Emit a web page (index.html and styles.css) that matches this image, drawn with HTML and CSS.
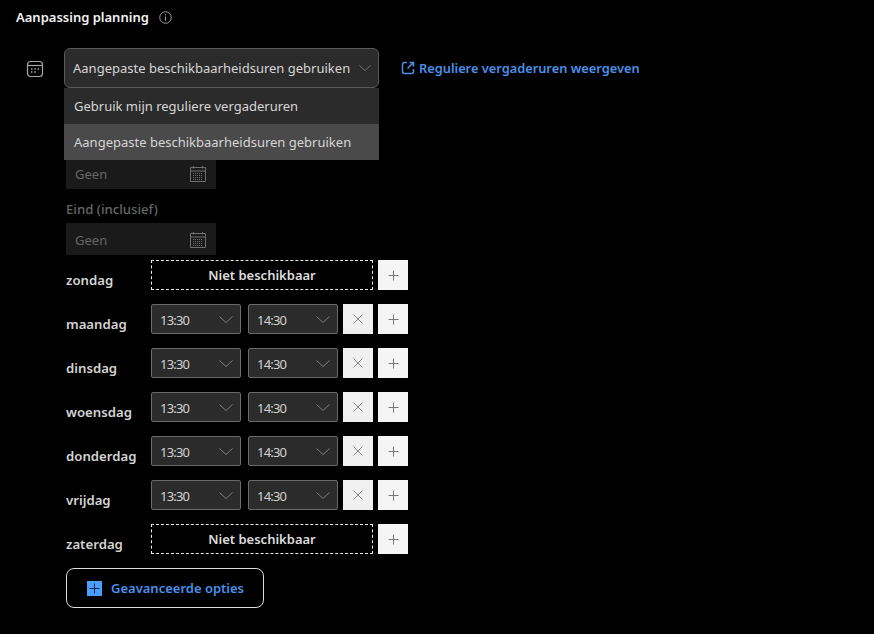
FILE: index.html
```html
<!DOCTYPE html>
<html lang="nl">
<head>
<meta charset="utf-8">
<title>Aanpassing planning</title>
<link rel="stylesheet" href="styles.css">
</head>
<body>
<svg class="defs" width="0" height="0" aria-hidden="true">
  <symbol id="cal" viewBox="0 0 18 18">
    <path d="M1.500 2.500h15v14h-15z M1.500 6h15 M4.500 1v2.500 M13.500 1v2.500" fill="none" stroke="currentColor" stroke-width="1"/>
    <path d="M4 8.500h10M4 10.500h10M4 12.500h10M4 14.500h10" fill="none" stroke="currentColor" stroke-width="1" stroke-dasharray="1 1"/>
  </symbol>
  <symbol id="chev" viewBox="0 0 14 7">
    <path d="M0.500 0.500l6.500 6 6.500-6" fill="none" stroke="currentColor" stroke-width="1"/>
  </symbol>
  <symbol id="plus" viewBox="0 0 12 12">
    <path d="M6.500 1.500v10M1.500 6.500h10" fill="none" stroke="currentColor" stroke-width="1"/>
  </symbol>
  <symbol id="cross" viewBox="0 0 12 12">
    <path d="M1.500 1.500l9 9M10.500 1.500l-9 9" fill="none" stroke="currentColor" stroke-width="1"/>
  </symbol>
</svg>

<header class="heading">
  <h1 class="title">Aanpassing planning</h1>
  <svg class="info" viewBox="0 0 14 14" width="13" height="13"><circle cx="7" cy="7" r="6.200" fill="none" stroke="currentColor"/><path d="M7 6v4.500M7 3.500v1.200" stroke="currentColor" fill="none"/></svg>
</header>

<main class="layout">
  <svg class="side-icon" viewBox="0 0 18 18" width="18" height="18">
    <rect x="1.500" y="1.500" width="15" height="15" rx="3" fill="none" stroke="currentColor" stroke-width="1.200"/>
    <path d="M1.500 5.500h15" stroke="currentColor" stroke-width="1.200"/>
    <path d="M5 9h1.500M8.300 9h1.500M11.600 9h1.500M5 12h1.500M8.300 12h1.500" stroke="currentColor" stroke-width="1.500"/>
  </svg>
  <div class="content">
    <div class="top-row">
      <div class="combo">
        <div class="combo-box">
          <span>Aangepaste beschikbaarheidsuren gebruiken</span>
          <svg class="combo-chev"><use href="#chev"/></svg>
        </div>
        <ul class="menu">
          <li class="menu-item">Gebruik mijn reguliere vergaderuren</li>
          <li class="menu-item active">Aangepaste beschikbaarheidsuren gebruiken</li>
        </ul>
      </div>
      <a class="link" href="#">
        <svg viewBox="0 0 14 14" width="14" height="14"><path d="M6 1.500H3.500a2 2 0 0 0-2 2v7a2 2 0 0 0 2 2h7a2 2 0 0 0 2-2V8M8.500 1.500h4v4M12.500 1.500L6.500 7.500" fill="none" stroke="currentColor" stroke-width="1.500"/></svg>
        Reguliere vergaderuren weergeven
      </a>
    </div>

    <div class="dates">
      <div class="date-field"><span>Geen</span><svg class="date-icon"><use href="#cal"/></svg></div>
      <div class="date-label">Eind (inclusief)</div>
      <div class="date-field"><span>Geen</span><svg class="date-icon"><use href="#cal"/></svg></div>
    </div>

    <div class="days">
      <div class="day"><span class="day-name">zondag</span><div class="unavailable">Niet beschikbaar</div><button class="square"><svg><use href="#plus"/></svg></button></div>
      <div class="day"><span class="day-name">maandag</span><div class="time"><span>13:30</span><svg><use href="#chev"/></svg></div><div class="time"><span>14:30</span><svg><use href="#chev"/></svg></div><button class="square remove"><svg><use href="#cross"/></svg></button><button class="square"><svg><use href="#plus"/></svg></button></div>
      <div class="day"><span class="day-name">dinsdag</span><div class="time"><span>13:30</span><svg><use href="#chev"/></svg></div><div class="time"><span>14:30</span><svg><use href="#chev"/></svg></div><button class="square remove"><svg><use href="#cross"/></svg></button><button class="square"><svg><use href="#plus"/></svg></button></div>
      <div class="day"><span class="day-name">woensdag</span><div class="time"><span>13:30</span><svg><use href="#chev"/></svg></div><div class="time"><span>14:30</span><svg><use href="#chev"/></svg></div><button class="square remove"><svg><use href="#cross"/></svg></button><button class="square"><svg><use href="#plus"/></svg></button></div>
      <div class="day"><span class="day-name">donderdag</span><div class="time"><span>13:30</span><svg><use href="#chev"/></svg></div><div class="time"><span>14:30</span><svg><use href="#chev"/></svg></div><button class="square remove"><svg><use href="#cross"/></svg></button><button class="square"><svg><use href="#plus"/></svg></button></div>
      <div class="day"><span class="day-name">vrijdag</span><div class="time"><span>13:30</span><svg><use href="#chev"/></svg></div><div class="time"><span>14:30</span><svg><use href="#chev"/></svg></div><button class="square remove"><svg><use href="#cross"/></svg></button><button class="square"><svg><use href="#plus"/></svg></button></div>
      <div class="day"><span class="day-name">zaterdag</span><div class="unavailable">Niet beschikbaar</div><button class="square"><svg><use href="#plus"/></svg></button></div>
    </div>

    <button class="advanced">
      <svg viewBox="0 0 15 15" width="15" height="15"><rect width="15" height="15" fill="#4a9eff"/><path d="M7.500 2.500v10M2.500 7.500h10" stroke="#0b2545" stroke-width="1" fill="none"/></svg>
      <span>Geavanceerde opties</span>
    </button>
  </div>
</main>
</body>
</html>
```
FILE: styles.css
```css
* { box-sizing: border-box; }
html, body { height: 100%; }
body {
  margin: 0;
  padding: 8px 16px 0;
  background: #000;
  color: #ddd;
  font-family: "Noto Sans", "Open Sans", "Liberation Sans", sans-serif;
  font-size: 13px;
  overflow: hidden;
}
.defs { position: absolute; }
.heading { display: flex; align-items: center; gap: 10px; height: 18px; }
.title { margin: 0; font-size: 13px; font-weight: 600; color: #f4f4f4; line-height: 18px; }
.info { color: #a8a8a8; }
.layout { display: flex; margin-top: 22px; }
.side-icon { color: #a8a8a8; margin: 12px 0 0 10px; flex: none; }
.content { margin-left: 20px; width: 700px; }
.top-row { display: flex; align-items: center; gap: 22px; }
.combo { position: relative; width: 315px; }
.combo-box {
  display: flex; align-items: center; justify-content: space-between;
  height: 40px; padding: 0 7px 0 8px;
  background: #2b2b2b; border: 1px solid #5a5a5a; border-radius: 6px;
  color: #d6d6d6; font-size: 13px; white-space: nowrap;
}
.combo-chev { width: 12px; height: 6px; color: #808080; flex: none; }
.menu {
  position: absolute; left: 0; top: 40px; width: 315px; margin: 0; padding: 0;
  list-style: none; background: #2b2b2b; z-index: 2;
}
.menu-item { height: 36px; line-height: 36px; padding-left: 10px; color: #d6d6d6; font-size: 13px; white-space: nowrap; }
.menu-item.active { background: #4a4a4a; }
.link { display: flex; align-items: center; gap: 4px; color: #4a90e8; font-size: 12.800px; font-weight: 600; text-decoration: none; white-space: nowrap; }
.dates { margin: 69px 0 0 2px; }
.date-field {
  display: flex; align-items: center; justify-content: space-between;
  width: 150px; height: 32px; padding: 1px 9px 0;
  background: #1a1a1a; color: #666; font-size: 13px;
}
.date-icon { width: 18px; height: 18px; color: #707070; }
.date-label { height: 34px; line-height: 40px; color: #666; font-size: 13.200px; font-weight: 500; }
.days { margin: 5px 0 0 2px; display: flex; flex-direction: column; gap: 14px; }
.day { display: flex; height: 30px; }
.day-name { width: 85px; padding-top: 11px; color: #d4d4d4; font-weight: 600; font-size: 13.200px; white-space: nowrap; }
.unavailable {
  width: 222px; height: 30px; margin-right: 5px; line-height: 28px; text-align: center;
  border: 1px dashed #eee; color: #ddd; font-weight: 600;
}
.time {
  display: flex; align-items: center; justify-content: space-between;
  width: 90px; height: 30px; margin-right: 7px; padding: 1px 7px 0 8px;
  background: #2b2b2b; border: 1px solid #6a6a6a; border-radius: 2px;
  color: #d2d2d2; font-size: 13px; letter-spacing: -0.800px;
}
.time svg { width: 14px; height: 7px; color: #808080; }
.time:nth-of-type(2) { margin-right: 5px; }
.square {
  display: flex; align-items: center; justify-content: center;
  width: 30px; height: 30px; padding: 0; border: 0; background: #f5f5f5; color: #777;
}
.square.remove { background: #f0f0f0; color: #8a8a8a; }
.square + .square { margin-left: 5px; }
.square svg { width: 12px; height: 12px; }
.advanced {
  display: flex; align-items: center; gap: 9px;
  width: 198px; height: 40px; margin: 14px 0 0 2px; padding: 0 0 0 20px;
  background: #000; border: 1px solid #ddd; border-radius: 8px;
  color: #4a90e8; font: 600 13px "Noto Sans", "Open Sans", sans-serif;
}
```
